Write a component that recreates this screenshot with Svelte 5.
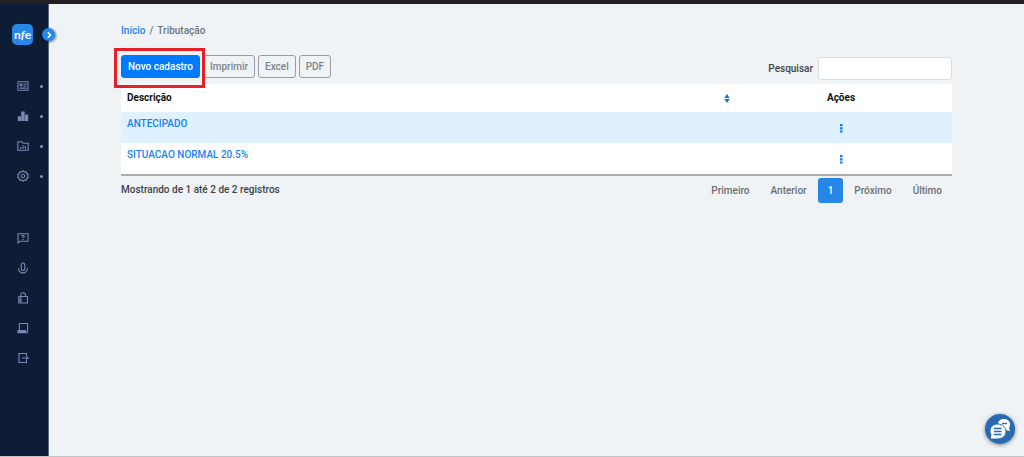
<script lang="ts">
  interface Tributacao {
    id: number;
    descricao: string;
  }

  const registros: Tributacao[] = [
    { id: 1, descricao: 'ANTECIPADO' },
    { id: 2, descricao: 'SITUACAO NORMAL 20.5%' }
  ];

  const menu = [
    { icon: 'cadastros', label: 'Cadastros' },
    { icon: 'movimento', label: 'Movimento' },
    { icon: 'relatorios', label: 'Relatórios' },
    { icon: 'config', label: 'Configurações' }
  ];

  const tools = [
    { icon: 'ajuda', label: 'Ajuda' },
    { icon: 'voz', label: 'Voz' },
    { icon: 'senha', label: 'Senha' },
    { icon: 'manual', label: 'Manual' },
    { icon: 'sair', label: 'Sair' }
  ];

  const exports = ['Imprimir', 'Excel', 'PDF'];

  let search = $state('');
</script>

{#snippet glyph(name: string)}
  <svg class="glyph" viewBox="0 0 12 12" aria-hidden="true">
    {#if name === 'cadastros'}
      <path d="M1 1.800h10v8.400H1zM3.200 4h1.800v1.800H3.200zM6.500 4h3M6.500 6h3M3 8.100h6.500" />
    {:else if name === 'movimento'}
      <path class="solid" d="M.8 6.200h3.200V11H.8zM4.200 1.500h3.500V11H4.200zM8 4.500h3.200V11H8z" />
    {:else if name === 'relatorios'}
      <path d="M.8 10.200V1.800h4L6 3.200h5.200v7zM3.700 9V7M6 9V5.200M8.300 9V6" />
    {:else if name === 'config'}
      <path
        d="M6 .7l1.300 1.400 1.900-.4.4 1.900 1.700.8L10.600 6l.7 1.600-1.700.8-.4 1.900-1.900-.4L6 11.300 4.700 9.900l-1.900.4-.4-1.900-1.700-.8L1.400 6 .7 4.400l1.700-.8.4-1.900 1.900.4z"
      />
      <circle cx="6" cy="6" r="1.700" />
    {:else if name === 'ajuda'}
      <path d="M1 11V1.800h10v7.400H3zM4.700 4.500c0-1.500 2.600-1.500 2.600 0 0 .9-1.300.8-1.300 1.700M6 7v1" />
    {:else if name === 'voz'}
      <path d="M4.200 3c0-2.700 3.600-2.700 3.600 0v3.400c0 2.700-3.600 2.700-3.600 0zM1.500 6.200c.2 6 8.800 6 9 0M4 11h4" />
    {:else if name === 'senha'}
      <path d="M1.800 4.500h8.700V11H1.800zM3.800 4.500V3c0-3 4.600-3 4.600 0v1.500M4 5v6M2 7h2M2 9h2" />
    {:else if name === 'manual'}
      <path d="M2.400 8.300V1.500h8.200v9M9 8.600H1v2h9.500M9 9.600H1.500" />
    {:else if name === 'sair'}
      <path d="M9.500 4V1.500H2v9h7.500V8M5 6h6M9.300 4.300L11.200 6 9.300 7.700" />
    {/if}
  </svg>
{/snippet}

<div class="app">
  <div class="topbar"></div>
  <div class="shell">
    <aside class="sidebar">
      <a class="logo" href="#inicio" aria-label="nfe">
        <span>n<i>f</i>e</span>
      </a>
      <button class="toggle" type="button" aria-label="Expandir menu">
        <svg viewBox="0 0 8 8" aria-hidden="true"><path d="M2.800 1.200L5.600 4 2.800 6.800" /></svg>
      </button>
      <nav class="menu">
        {#each menu as item}
          <a class="dotted" href={`#${item.icon}`} aria-label={item.label}>{@render glyph(item.icon)}</a>
        {/each}
      </nav>
      <nav class="menu tools">
        {#each tools as item}
          <a href={`#${item.icon}`} aria-label={item.label}>{@render glyph(item.icon)}</a>
        {/each}
      </nav>
    </aside>

    <main>
      <nav class="breadcrumb">
        <a href="#inicio">Início</a>
        <span>/</span>
        <span>Tributação</span>
      </nav>

      <div class="toolbar">
        <div class="actions">
          <div class="highlight">
            <button class="btn primary" type="button">Novo cadastro</button>
          </div>
          {#each exports as label}
            <button class="btn" type="button">{label}</button>
          {/each}
        </div>
        <label class="search">
          Pesquisar
          <input type="search" bind:value={search} />
        </label>
      </div>

      <table>
        <thead>
          <tr>
            <th>
              <div class="sortable">
                Descrição
                <svg viewBox="0 0 6 10" aria-hidden="true"><path d="M3 0l3 4.400H0zM3 10L0 5.600h6z" /></svg>
              </div>
            </th>
            <th class="options">Ações</th>
          </tr>
        </thead>
        <tbody>
          {#each registros as registro (registro.id)}
            <tr>
              <td><a href={`#tributacao-${registro.id}`}>{registro.descricao}</a></td>
              <td class="options">
                <button class="more" type="button" aria-label="Ações">
                  <svg viewBox="0 0 3 9" aria-hidden="true">
                    <path d="M0 0h2.500v2.200H0zM0 3.200h2.500v2.200H0zM0 6.400h2.500v2.200H0z" />
                  </svg>
                </button>
              </td>
            </tr>
          {/each}
        </tbody>
      </table>

      <div class="footer">
        <span>Mostrando de 1 até 2 de 2 registros</span>
        <div class="pages">
          <button type="button">Primeiro</button>
          <button type="button">Anterior</button>
          <button class="current" type="button">1</button>
          <button type="button">Próximo</button>
          <button type="button">Último</button>
        </div>
      </div>
    </main>
  </div>

  <button class="chat" type="button" aria-label="Chat">
    <svg viewBox="0 0 30 30" aria-hidden="true">
      <path d="M13 9c1-5.500 12-5.500 12 1 0 2-.5 3-1 4l1 3-5-1z" />
      <path class="lines" d="M17 9.500h5" />
      <path class="front" d="M5 25l1-4c-3-6 1-11 6.500-11s8.500 3.500 8.500 7.500-3.500 7.500-8.500 7.500z" />
      <path class="lines" d="M9 14.500h7.500M9 17.500h7.500M9 20.500h7.500" />
    </svg>
  </button>
</div>

<style>
  :global(body) {
    margin: 0;
    background: #eff3f5;
  }
  .app {
    display: flex;
    flex-direction: column;
    min-height: 100vh;
    box-sizing: border-box;
    border-bottom: 1px solid #c3c6c8;
    color: #3e444a;
    font: 500 10px/16px Roboto, sans-serif;
  }
  button,
  input {
    font: inherit;
  }
  button {
    cursor: pointer;
  }
  a {
    color: #1583f5;
    text-decoration: none;
  }
  .topbar {
    height: 4px;
    background: #211f21;
  }
  .shell {
    display: flex;
    flex: 1;
  }
  .sidebar {
    position: relative;
    display: flex;
    flex: 0 0 48px;
    flex-direction: column;
    border-right: 1px solid #5b6b80;
    background: #0c1d35;
  }
  .logo {
    display: flex;
    align-items: center;
    justify-content: center;
    width: 21px;
    height: 21px;
    margin: 20px 0 26px 12px;
    border-radius: 5px;
    background: #2787e9;
    color: #fff;
    font: 700 12px/20px Lato, sans-serif;
  }
  .toggle {
    position: absolute;
    top: 24px;
    right: -7px;
    display: grid;
    width: 13px;
    height: 13px;
    padding: 0;
    place-items: center;
    border: 0;
    border-radius: 50%;
    background: #2787e9;
    box-shadow: 1px 1px 3px #0008;
  }
  .toggle svg {
    width: 8px;
    height: 8px;
    fill: none;
    stroke: #fff;
    stroke-width: 1.5;
  }
  .menu {
    display: grid;
  }
  .menu a {
    display: flex;
    align-items: center;
    gap: 11px;
    height: 30px;
    padding-left: 17px;
  }
  .dotted::after {
    width: 3px;
    height: 3px;
    border-radius: 50%;
    background: #8b93b8;
    content: '';
  }
  .tools {
    margin-top: 32px;
  }
  .glyph {
    width: 12px;
    height: 12px;
    fill: none;
    stroke: #7d86b3;
    stroke-width: 1.1;
  }
  .solid {
    fill: #7d86b3;
    stroke: none;
  }
  main {
    flex: 1;
    min-width: 0;
    padding: 19px 72px 0;
  }
  .breadcrumb {
    display: flex;
    gap: 4px;
    color: #6c757d;
  }
  .toolbar {
    display: flex;
    align-items: flex-start;
    justify-content: space-between;
    padding-top: 16px;
  }
  .actions {
    display: flex;
    gap: 3px;
  }
  .btn {
    height: 23px;
    padding: 0 6px;
    border: 1px solid #979da3;
    border-radius: 3px;
    background: transparent;
    color: #7d858c;
  }
  .primary {
    border-color: #007bff;
    background: #007bff;
    color: #fff;
  }
  .highlight {
    position: relative;
  }
  .highlight::after {
    position: absolute;
    inset: -7px -5px -10px -7px;
    border: 3px solid #e61e25;
    content: '';
    pointer-events: none;
  }
  .search {
    display: flex;
    align-items: center;
    gap: 5px;
    padding: 2px 0 4px;
  }
  .search input {
    width: 134px;
    height: 23px;
    box-sizing: border-box;
    padding: 0 6px;
    border: 1px solid #d9dde1;
    border-radius: 3px;
    background: #fff;
  }
  table {
    width: 100%;
    border-bottom: 2px solid #a8acab;
    border-spacing: 0;
    background: #fff;
  }
  th {
    height: 28px;
    padding: 0 6px;
    color: #111;
    font-weight: 700;
    text-align: left;
  }
  th:first-child {
    padding-right: 0;
  }
  .sortable {
    display: flex;
    align-items: center;
    justify-content: space-between;
  }
  .sortable svg {
    width: 6px;
    height: 9px;
    fill: #1273de;
  }
  td {
    height: 31px;
    box-sizing: border-box;
    padding: 4px 6px;
    vertical-align: top;
  }
  tbody tr:nth-child(odd) {
    background: #dff1fe;
  }
  .options {
    width: 210px;
    text-align: center;
  }
  td.options {
    padding: 7px 6px 0;
  }
  .more {
    display: inline-flex;
    padding: 5px;
    border: 0;
    background: none;
  }
  .more svg {
    width: 3px;
    height: 9px;
    fill: #0b7dff;
  }
  .footer {
    display: flex;
    align-items: flex-start;
    justify-content: space-between;
    padding-top: 2px;
  }
  .footer > span {
    padding-top: 4px;
  }
  .pages {
    display: flex;
    gap: 1px;
  }
  .pages button {
    height: 25px;
    padding: 0 10px;
    border: 0;
    border-radius: 3px;
    background: none;
    color: #6b6f72;
  }
  .pages .current {
    background: #2787e9;
    color: #fff;
  }
  .chat {
    position: fixed;
    right: 9px;
    bottom: 13px;
    width: 30px;
    height: 30px;
    padding: 0;
    border: 0;
    border-radius: 50%;
    background: #2869b2;
    box-shadow: 0 1px 4px #0007;
  }
  .chat svg {
    display: block;
    fill: #fff;
  }
  .chat .front {
    stroke: #2869b2;
  }
  .chat .lines {
    stroke: #2869b2;
    stroke-width: 1.3;
  }
</style>
